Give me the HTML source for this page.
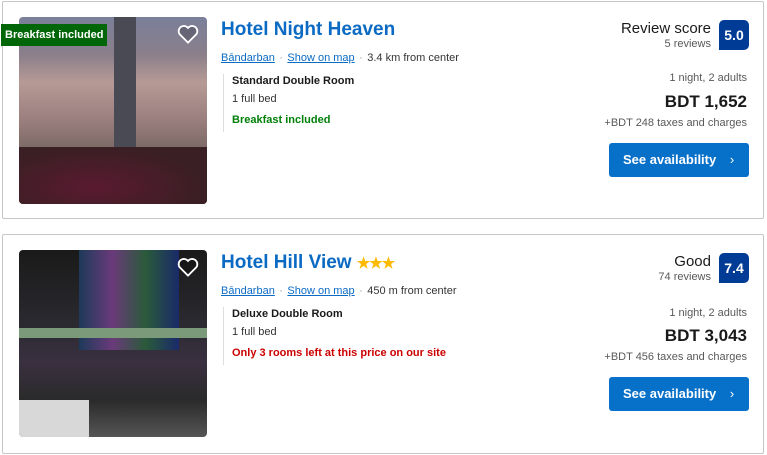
<!DOCTYPE html>
<html><head><style>
body{margin:0;width:767px;height:455px;background:#fff;font-family:"Liberation Sans",Arial,sans-serif;position:relative;overflow:hidden;color:#1a1a1a}
.card{position:absolute;left:2px;width:762px;border:1px solid #c6c6c6;border-radius:2px;box-sizing:border-box}
.a{position:absolute;white-space:nowrap}
.img{position:absolute;left:16px;width:188px;height:187px;border-radius:4px;overflow:hidden}
.t{font-size:19px;font-weight:bold;color:#0b6ac3}
.l{font-size:11px;color:#0b6ac3;text-decoration:underline}
.s{font-size:11px;color:#333}
.btn{position:absolute;left:606px;width:140px;height:34px;background:#0770c9;border-radius:3px;color:#fff;font-weight:bold;font-size:13px;line-height:34px;padding-left:14px;box-sizing:border-box}
.sc{position:absolute;left:716px;width:30px;height:30px;background:#003b95;border-radius:5px 5px 5px 0;color:#fff;font-weight:bold;font-size:14px;text-align:center;line-height:30px}
</style></head><body>
<div class="card" style="top:1px;height:218px">
 <div class="img" style="top:15px;background:linear-gradient(180deg,#7a7f9a 0%,#8a7f8a 20%,#b69a95 35%,#9b7f7f 55%,#7c6a66 70%,#4a2a30 85%,#3a2228 100%)">
  <div style="position:absolute;left:95px;top:0;width:22px;height:150px;background:#4a4a55"></div>
  <div style="position:absolute;left:0;top:130px;width:188px;height:57px;background:radial-gradient(ellipse at 40% 70%,#5a1a30,#3a1f24 70%)"></div>
 </div>
 <div class="a" style="left:-2px;top:22px;background:#006607;color:#fff;font-weight:bold;font-size:11px;padding:3px 4px;height:16px;line-height:16px">Breakfast included</div>
 <svg class="a" style="left:174px;top:22px" width="22" height="20" viewBox="0 0 24 22"><path d="M12 20.5 3 11.5a5.3 5.3 0 0 1 9-7.2 5.3 5.3 0 0 1 9 7.2z" fill="rgba(0,0,0,.2)" stroke="#fff" stroke-width="2"/></svg>
 <div class="a t" style="left:218px;top:17px">Hotel Night Heaven</div>
 <div class="a" style="left:218px;top:46px"><span class="l">Bāndarban</span> <span class="s" style="color:#999">·</span> <span class="l">Show on map</span> <span class="s" style="color:#999">·</span> <span class="s">3.4 km from center</span></div>
 <div class="a" style="left:220px;top:72px;width:1px;height:58px;background:#ddd"></div>
 <div class="a" style="left:229px;top:73px;font-size:11px;font-weight:bold">Standard Double Room</div>
 <div class="a s" style="left:229px;top:91px">1 full bed</div>
 <div class="a" style="left:229px;top:112px;font-size:11px;font-weight:bold;color:#008009">Breakfast included</div>
 <div class="a" style="right:52px;top:18px;font-size:15px">Review score</div>
 <div class="a" style="right:52px;top:36px;font-size:11px;color:#595959">5 reviews</div>
 <div class="sc" style="top:18px">5.0</div>
 <div class="a" style="right:16px;top:70px;font-size:11px;color:#595959">1 night, 2 adults</div>
 <div class="a" style="right:16px;top:90px;font-size:17px;font-weight:bold;color:#1a1a1a">BDT 1,652</div>
 <div class="a" style="right:16px;top:115px;font-size:11px;color:#595959">+BDT 248 taxes and charges</div>
 <div class="btn" style="top:141px">See availability <span style="margin-left:10px;font-weight:normal">›</span></div>
</div>
<div class="card" style="top:234px;height:220px">
 <div class="img" style="top:15px;background:linear-gradient(180deg,#1a1a1a 0%,#2a2a30 40%,#3a3040 60%,#2a2a2a 80%,#555 100%)">
  <div style="position:absolute;left:60px;top:0;width:100px;height:100px;background:linear-gradient(90deg,#1d3a5a,#6a3a7a,#2a5a3a,#1a2a6a)"></div>
  <div style="position:absolute;left:0;top:78px;width:188px;height:10px;background:#7a9a7a"></div>
  <div style="position:absolute;left:0;top:150px;width:70px;height:37px;background:#d8d8d8"></div>
 </div>
 <svg class="a" style="left:174px;top:22px" width="22" height="20" viewBox="0 0 24 22"><path d="M12 20.5 3 11.5a5.3 5.3 0 0 1 9-7.2 5.3 5.3 0 0 1 9 7.2z" fill="rgba(0,0,0,.2)" stroke="#fff" stroke-width="2"/></svg>
 <div class="a t" style="left:218px;top:17px">Hotel Hill View <span style="color:#febb02;font-size:15px;letter-spacing:-1px">★★★</span></div>
 <div class="a" style="left:218px;top:46px"><span class="l">Bāndarban</span> <span class="s" style="color:#999">·</span> <span class="l">Show on map</span> <span class="s" style="color:#999">·</span> <span class="s">450 m from center</span></div>
 <div class="a" style="left:220px;top:72px;width:1px;height:58px;background:#ddd"></div>
 <div class="a" style="left:229px;top:73px;font-size:11px;font-weight:bold">Deluxe Double Room</div>
 <div class="a s" style="left:229px;top:91px">1 full bed</div>
 <div class="a" style="left:229px;top:112px;font-size:11px;font-weight:bold;color:#c00">Only 3 rooms left at this price on our site</div>
 <div class="a" style="right:52px;top:18px;font-size:15px">Good</div>
 <div class="a" style="right:52px;top:36px;font-size:11px;color:#595959">74 reviews</div>
 <div class="sc" style="top:18px">7.4</div>
 <div class="a" style="right:16px;top:72px;font-size:11px;color:#595959">1 night, 2 adults</div>
 <div class="a" style="right:16px;top:91px;font-size:17px;font-weight:bold;color:#1a1a1a">BDT 3,043</div>
 <div class="a" style="right:16px;top:116px;font-size:11px;color:#595959">+BDT 456 taxes and charges</div>
 <div class="btn" style="top:142px">See availability <span style="margin-left:10px;font-weight:normal">›</span></div>
</div>
</body></html>
